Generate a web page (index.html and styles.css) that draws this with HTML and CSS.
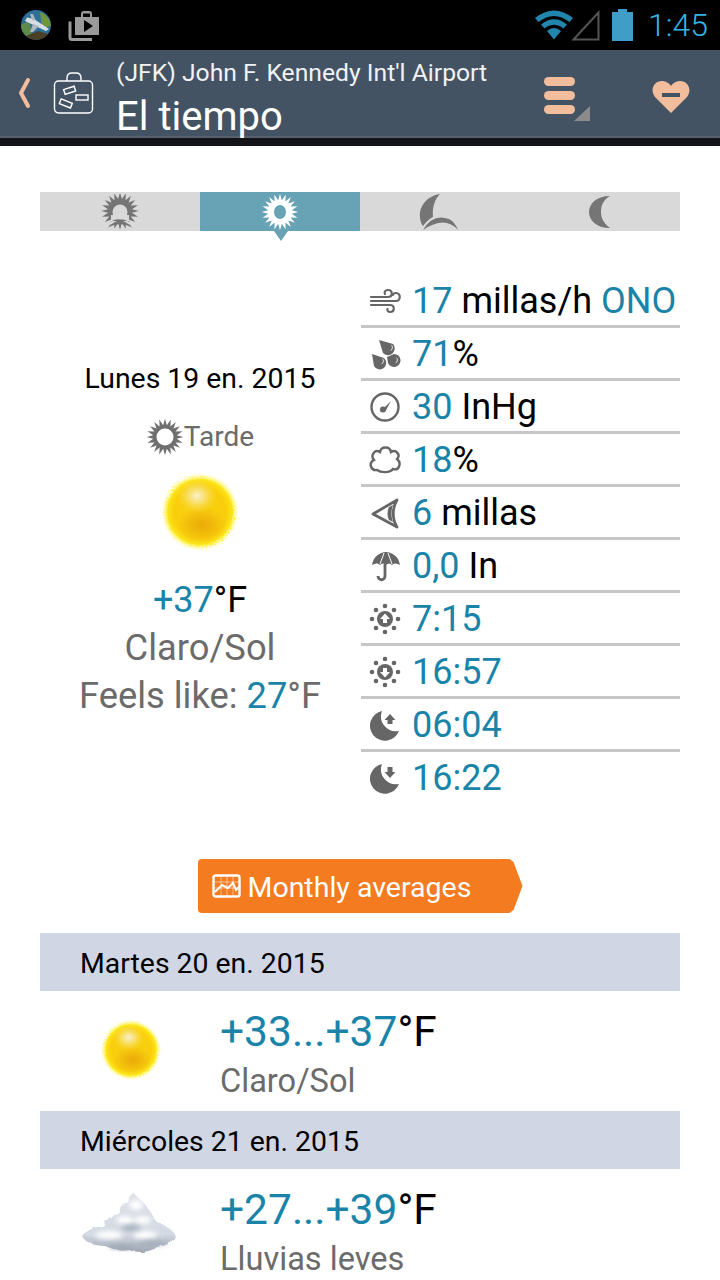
FILE: index.html
```html
<!DOCTYPE html>
<html lang="es">
<head>
    <meta charset="UTF-8">
    <meta name="viewport" content="width=device-width, initial-scale=1.0">
    <title>El tiempo</title>
    <link rel="stylesheet" href="styles.css">
</head>
<body>

    <svg class="defs" width="0" height="0">
        <defs>
            <polygon id="rays" points="17,0 10.9,1.7 16.2,5.3 9.8,5 13.8,10 7.8,7.8 10,13.8 5,9.8 5.3,16.2 1.7,10.9 0,17 -1.7,10.9 -5.3,16.2 -5,9.8 -10,13.8 -7.8,7.8 -13.8,10 -9.8,5 -16.2,5.3 -10.9,1.7 -17,0 -10.9,-1.7 -16.2,-5.3 -9.8,-5 -13.8,-10 -7.8,-7.8 -10,-13.8 -5,-9.8 -5.3,-16.2 -1.7,-10.9 0,-17 1.7,-10.9 5.3,-16.2 5,-9.8 10,-13.8 7.8,-7.8 13.8,-10 9.8,-5 16.2,-5.3 10.9,-1.7"/>
            <radialGradient id="sunGlow">
                <stop offset="0.78" stop-color="#fde61a"/>
                <stop offset="0.87" stop-color="#fdf040" stop-opacity="0.85"/>
                <stop offset="1" stop-color="#fffbb0" stop-opacity="0"/>
            </radialGradient>
            <radialGradient id="sunBody">
                <stop offset="0" stop-color="#f8cf12"/>
                <stop offset="0.8" stop-color="#f9cf0c"/>
                <stop offset="1" stop-color="#fde61a"/>
            </radialGradient>
            <radialGradient id="sunLow">
                <stop offset="0" stop-color="#e9a508" stop-opacity="0.9"/>
                <stop offset="1" stop-color="#e9a508" stop-opacity="0"/>
            </radialGradient>
            <radialGradient id="sunHigh">
                <stop offset="0" stop-color="#f8f0d2"/>
                <stop offset="0.4" stop-color="#f8e58a" stop-opacity="0.8"/>
                <stop offset="1" stop-color="#f8dc40" stop-opacity="0"/>
            </radialGradient>
            <symbol id="sunball" viewBox="0 0 80 80">
                <circle cx="40" cy="40" r="39" fill="url(#sunGlow)" filter="url(#fuzz)"/>
                <circle cx="40" cy="40" r="33" fill="url(#sunBody)"/>
                <ellipse cx="42" cy="53" rx="25" ry="18" fill="url(#sunLow)"/>
                <ellipse cx="37" cy="24" rx="20" ry="17" fill="url(#sunHigh)"/>
            </symbol>
            <g id="sunDots" fill="#666">
                <circle cx="16" cy="3" r="2.3"/><circle cx="16" cy="29" r="2.3"/>
                <circle cx="3" cy="16" r="2.3"/><circle cx="29" cy="16" r="2.3"/>
                <circle cx="7" cy="7" r="2.3"/><circle cx="25" cy="7" r="2.3"/>
                <circle cx="7" cy="25" r="2.3"/><circle cx="25" cy="25" r="2.3"/>
                <circle cx="16" cy="16" r="8"/>
            </g>
            <path id="moonShape" fill="#666" d="M13 2 A15 15 0 1 0 30 22 A15 15 0 0 1 13 2 Z"/>
            <filter id="fuzz" x="-10%" y="-10%" width="120%" height="120%">
                <feTurbulence type="fractalNoise" baseFrequency="0.5" numOctaves="1" seed="7"/>
                <feDisplacementMap in="SourceGraphic" scale="5"/>
            </filter>
            <filter id="fluff" x="-5%" y="-5%" width="110%" height="110%">
                <feTurbulence type="fractalNoise" baseFrequency="0.18" numOctaves="2" seed="4"/>
                <feDisplacementMap in="SourceGraphic" scale="4"/>
            </filter>
            <filter id="soft"><feGaussianBlur stdDeviation="2.500"/></filter>
            <linearGradient id="cloudFill" x1="0" y1="0" x2="0" y2="1">
                <stop offset="0" stop-color="#dde1e8"/>
                <stop offset="0.7" stop-color="#d4dae3"/>
                <stop offset="1" stop-color="#9fa8b5"/>
            </linearGradient>
        </defs>
    </svg>

    <!-- status bar -->
    <div class="status">
        <div class="status-left">
            <svg class="app-icon" width="32" height="32" viewBox="0 0 32 32">
                <circle cx="16" cy="16" r="15" fill="#2c6f97"/>
                <path d="M20 3 A15 15 0 0 1 31 17 L22 20 Z" fill="#6f9440"/>
                <path d="M1 16 L9 12 L12 26 L6 27 Q1 22 1 16 Z" fill="#5f8a4a"/>
                <path d="M6 27 A15 15 0 0 0 28 25 L18 22 Z" fill="#4a3f24"/>
                <path d="M5 12 L26 22 L29 20 L14 10 L7 8.500 Z" fill="#d8dde2"/>
                <path d="M13 15 L10 23 L13 23 L19 17 Z M16 12 L13 5 L10 5 L12 11 Z" fill="#aeb6c0"/>
            </svg>
            <svg width="32" height="32" viewBox="0 0 32 32">
                <path d="M7 8 H13 V5 Q13 2 16 2 H21 Q24 2 24 5 V8 H31 V26 H7 Z M15 8 H22 V4.5 H15 Z" fill="#9a9a9a" fill-rule="evenodd"/>
                <path d="M16 11 L25 17 L16 23 Z" fill="#000"/>
                <path d="M2 14 V30 Q2 32 4 32 H24" transform="translate(0,-1.5)" fill="none" stroke="#9a9a9a" stroke-width="3"/>
            </svg>
        </div>
        <div class="status-right">
            <svg class="wifi" width="40" height="32" viewBox="0 0 40 32">
                <path d="M1 9 Q20 -6 39 9 L35.5 13 Q20 1 4.5 13 Z" fill="#2285ad"/>
                <path d="M7 15.5 Q20 5 33 15.5 L29.5 19.5 Q20 12 10.5 19.5 Z" fill="#2285ad"/>
                <path d="M13 22 Q20 16 27 22 L20 30.5 Z" fill="#2285ad"/>
            </svg>
            <svg class="signal" width="29" height="31" viewBox="0 0 29 31">
                <path d="M27.5 2.5 V29.5 H2.5 Z" fill="none" stroke="#555" stroke-width="2"/>
            </svg>
            <svg class="battery" width="21" height="32" viewBox="0 0 21 32">
                <path d="M6 0 H15 V3 H21 V32 H0 V3 H6 Z" fill="#3f9dc8"/>
            </svg>
            <span class="clock">1:45</span>
        </div>
    </div>

    <!-- header -->
    <div class="topbar">
        <svg class="back" width="14" height="32" viewBox="0 0 14 32">
            <path d="M11 3 L4 16 L11 29" fill="none" stroke="#f2bd9c" stroke-width="4" stroke-linecap="round" stroke-linejoin="round"/>
        </svg>
        <svg class="case" width="42" height="42" viewBox="0 0 42 42" fill="none" stroke="#fff" stroke-width="1.4">
            <rect x="1.5" y="9" width="38" height="32" rx="4"/>
            <path d="M14 9 V6 Q14 1 19 1 H23 Q28 1 28 6 V9"/>
            <rect x="11" y="16" width="11" height="5" transform="rotate(-18 16 18)"/>
            <rect x="23" y="23" width="12" height="5"/>
            <rect x="7" y="29" width="12" height="5" transform="rotate(22 13 31)"/>
        </svg>
        <div class="titles">
            <div class="subtitle">(JFK) John F. Kennedy Int'l Airport</div>
            <div class="title">El tiempo</div>
        </div>
        <div class="menu">
            <svg width="48" height="46" viewBox="0 0 48 46">
                <rect x="0" y="0" width="31" height="9" rx="4.5" fill="#f2bd9c"/>
                <rect x="0" y="14" width="31" height="9" rx="4.5" fill="#f2bd9c"/>
                <rect x="0" y="28" width="31" height="9" rx="4.5" fill="#f2bd9c"/>
                <path d="M30 44 L46 29 V44 Z" fill="#8b8b8b"/>
            </svg>
        </div>
        <svg class="heart" width="38" height="34" viewBox="0 0 38 34">
            <path d="M19 33 L3 17 C-3 9 3 0 11 1 C15 1.5 18 4 19 6 C20 4 23 1.5 27 1 C35 0 41 9 35 17 Z" fill="#f2bd9c"/>
            <rect x="10" y="13" width="18" height="4" fill="#445364"/>
        </svg>
    </div>
    <div class="strip"></div>

    <div class="content">

        <!-- part of day tabs -->
        <div class="tabs">
            <div class="tab">
                <svg width="40" height="36" viewBox="-20 -17 40 36">
                    <use href="#rays" fill="#757575" transform="scale(1.1)"/>
                    <circle r="7.500" cy="1" fill="#d9d9d9"/>
                    <path d="M-19 19 Q-1 -3 19 19 Q0 4 -19 19 Z M-9 10 H9 V4 H-9 Z" fill="#d9d9d9"/>
                    <path d="M-12 17 Q0 2 12 17 Q0 9 -12 17 Z" fill="#757575"/>
                </svg>
            </div>
            <div class="tab tab-active">
                <svg width="40" height="38" viewBox="-20 -19 40 38">
                    <use href="#rays" fill="#fff" transform="scale(1.08)"/>
                    <ellipse rx="6" ry="7" fill="#67a2b5"/>
                </svg>
            </div>
            <div class="tab">
                <svg width="42" height="38" viewBox="0 0 42 38">
                    <path d="M21 1 C8 3 0 13 1 24 C1 28 3 32 4 33 C8 28 10 26 14 24 C13 14 16 6 21 1 Z" fill="#757575"/>
                    <path d="M4 37 Q14 20 30 26 Q36 29 39 37 Q26 22 4 37 Z" fill="#757575"/>
                </svg>
            </div>
            <div class="tab">
                <svg width="24" height="34" viewBox="0 0 24 34">
                    <path d="M22 1 C8 1 1 9 1 17 C1 25 8 33 22 33 C15 28 13 22 13 17 C13 11 15 5 22 1 Z" fill="#757575"/>
                </svg>
            </div>
        </div>

        <div class="now">
            <div class="now-left">
                <div class="now-date">Lunes 19 en. 2015</div>
                <div class="now-part">
                    <svg width="38" height="38" viewBox="-19 -19 38 38">
                        <use href="#rays" fill="#6f6f6f" transform="scale(1.08)"/>
                        <circle r="8.5" fill="#fff"/>
                    </svg>
                    <span>Tarde</span>
                </div>
                <svg class="now-sun" width="80" height="80"><use href="#sunball"/></svg>
                <div class="now-temp"><span class="val">+37</span>°F</div>
                <div class="now-desc">Claro/Sol</div>
                <div class="now-desc">Feels like: <span class="val">27</span><span>°F</span></div>
            </div>

            <div class="now-right">
                <div class="row">
                    <svg class="row-icon" width="32" height="32" viewBox="0 0 32 32" fill="none" stroke="#666" stroke-width="2.2" stroke-linecap="round">
                        <path d="M2 12 H19 C24 12 24 5 19 5 C16 5 15 7 16 9"/>
                        <path d="M2 16 H27 C32 16 32 8 27 8 C25 8 24 9 24 10"/>
                        <path d="M2 20 H21 C26 20 26 27 21 27 C19 27 18 25 18.500 24"/>
                    </svg>
                    <span class="val">17</span>&nbsp;millas/h&nbsp;<span class="val">ONO</span>
                </div>
                <div class="row">
                    <svg class="row-icon" width="32" height="32" viewBox="0 0 32 32">
                        <path d="M10 2 L24 6 A6.500 6.500 0 1 1 14 15 Z M3 16 L15 20 A6.500 6.500 0 1 1 5 28 Z M18 19 L25 16 A6.500 6.500 0 1 1 19 25 Z" fill="#666"/>
                        <path d="M22 6.500 A3.500 3.500 0 0 1 21 13 A5 5 0 0 0 22 6.500 Z M13 20 A3.500 3.500 0 0 1 12 26.500 A5 5 0 0 0 13 20 Z M27 19 A3.500 3.500 0 0 1 26 25.500 A5 5 0 0 0 27 19 Z" fill="#fff"/>
                    </svg>
                    <span class="val">71</span>%
                </div>
                <div class="row">
                    <svg class="row-icon" width="32" height="32" viewBox="0 0 32 32">
                        <circle cx="16" cy="16" r="13.500" fill="none" stroke="#666" stroke-width="2.400"/>
                        <path d="M11 21 L22 10 L16.500 20 Z" fill="#666"/>
                        <circle cx="14" cy="18.500" r="3" fill="#666"/>
                    </svg>
                    <span class="val">30</span>&nbsp;InHg
                </div>
                <div class="row">
                    <svg class="row-icon" width="32" height="32" viewBox="0 0 32 32">
                        <path d="M8 26 C2 27 -1 19 5 16 C1 11 6 5 11 8 C12 2 21 2 22 8 C27 5 32 11 28 15 C33 19 30 27 24 25 C21 29 12 29 8 26 Z" fill="none" stroke="#666" stroke-width="2.400"/>
                    </svg>
                    <span class="val">18</span>%
                </div>
                <div class="row">
                    <svg class="row-icon" width="32" height="32" viewBox="0 0 32 32">
                        <path d="M28 3 L4 17 L28 30 C23 22 23 11 28 3 Z" fill="none" stroke="#666" stroke-width="2.800" stroke-linejoin="round"/>
                        <path d="M20 10 L24 8 C22 13 22 20 24 25 L20 23 C18 19 18 14 20 10 Z" fill="#666"/>
                    </svg>
                    <span class="val">6</span>&nbsp;millas
                </div>
                <div class="row">
                    <svg class="row-icon" width="32" height="32" viewBox="0 0 32 32">
                        <path d="M3 15 C4 7 11 2 17 2 C23 2 30 7 31 15 C28 13 25 13 23 15 C21 13 19 13 17 15 C15 13 13 13 11 15 C9 13 6 13 3 15 Z" fill="#666"/>
                        <path d="M11 14 L15 3 M23 14 L19 3" stroke="#fff" stroke-width="1" fill="none"/>
                        <path d="M16 14 V26 C16 31 9 31 9 26" fill="none" stroke="#666" stroke-width="2.800"/>
                    </svg>
                    <span class="val">0,0</span>&nbsp;In
                </div>
                <div class="row">
                    <svg class="row-icon" width="32" height="32" viewBox="0 0 32 32">
                        <use href="#sunDots"/>
                        <path d="M16 10.500 L21 16 H18 V20 H14 V16 H11 Z" fill="#fff"/>
                    </svg>
                    <span class="val">7:15</span>
                </div>
                <div class="row">
                    <svg class="row-icon" width="32" height="32" viewBox="0 0 32 32">
                        <use href="#sunDots"/>
                        <path d="M16 21.500 L21 16 H18 V12 H14 V16 H11 Z" fill="#fff"/>
                    </svg>
                    <span class="val">16:57</span>
                </div>
                <div class="row">
                    <svg class="row-icon" width="32" height="32" viewBox="0 0 32 32">
                        <use href="#moonShape"/>
                        <path d="M21 5 L26.500 11 H23.500 V15 H18.500 V11 H15.500 Z" fill="#666"/>
                    </svg>
                    <span class="val">06:04</span>
                </div>
                <div class="row row-last">
                    <svg class="row-icon" width="32" height="32" viewBox="0 0 32 32">
                        <use href="#moonShape"/>
                        <path d="M21 16 L26.500 10 H23.500 V5 H18.500 V10 H15.500 Z" fill="#666"/>
                    </svg>
                    <span class="val">16:22</span>
                </div>
            </div>
        </div>

        <div class="btn-wrap">
            <div class="btn-monthly">
                <svg width="30" height="24" viewBox="0 0 30 24" fill="none" stroke="#fff">
                    <rect x="1.500" y="1.500" width="26" height="21" rx="2" stroke-width="2.400"/>
                    <path d="M2 8 H28 M2 14 H28 M9 2 V22 M15 2 V22 M21 2 V22" stroke-width="0.700" opacity="0.700"/>
                    <path d="M3 18 L10 11 L16 14 L21 9 L24 16 L28 12" stroke-width="2"/>
                </svg>
                <span class="btn-label">Monthly averages</span>
            </div>
        </div>

        <!-- next days -->
        <div class="day-bar">Martes 20 en. 2015</div>
        <div class="day">
            <div class="day-pic">
                <svg class="pic-sun" width="62" height="62"><use href="#sunball"/></svg>
            </div>
            <div class="day-info">
                <div class="day-temp"><span class="val">+33...+37</span>°F</div>
                <div class="day-desc">Claro/Sol</div>
            </div>
        </div>

        <div class="day-bar">Miércoles 21 en. 2015</div>
        <div class="day">
            <div class="day-pic">
                <svg class="pic-cloud" width="98" height="66" viewBox="0 0 98 66">
                    <g filter="url(#fluff)">
                        <path d="M1 46 C4 41 14 37 22 36 C24 30 32 24 38 24 C41 16 46 12 52 2 C56 8 64 12 68 20 C72 24 72 28 76 32 C84 35 93 40 95 47 C92 54 82 56 76 57 C68 63 56 63 48 60 C38 62 30 58 24 56 C14 56 3 52 1 46 Z" fill="url(#cloudFill)"/>
                    </g>
                    <g filter="url(#soft)" fill="#fff">
                        <ellipse cx="55" cy="15" rx="7" ry="5"/>
                        <ellipse cx="44" cy="30" rx="9" ry="4"/>
                        <ellipse cx="62" cy="30" rx="8" ry="4"/>
                        <ellipse cx="28" cy="45" rx="14" ry="4"/>
                        <ellipse cx="64" cy="45" rx="12" ry="4"/>
                    </g>
                    <g filter="url(#soft)" fill="#9aa4b2" opacity="0.800">
                        <ellipse cx="50" cy="38" rx="10" ry="3"/>
                        <ellipse cx="42" cy="57" rx="14" ry="2.500"/>
                        <ellipse cx="72" cy="53" rx="14" ry="2.500"/>
                    </g>
                </svg>
            </div>
            <div class="day-info">
                <div class="day-temp"><span class="val">+27...+39</span>°F</div>
                <div class="day-desc">Lluvias leves</div>
            </div>
        </div>

    </div>

</body>
</html>
```

FILE: styles.css
```css
html, body {
    margin: 0;
    padding: 0;
    height: 1280px;
    overflow: hidden;
    background-color: #fff;
    font-family: Roboto, 'Liberation Sans', sans-serif;
    color: #000;
}

svg {
    display: block;
    flex: none;
}

.defs {
    position: absolute;
}

.val {
    color: #1a84a8;
}

/* status bar */
.status {
    height: 50px;
    background-color: #000;
    display: flex;
    justify-content: space-between;
    align-items: center;
}

.status-left {
    display: flex;
    align-items: center;
    gap: 16px;
    padding-left: 20px;
}

.status-right {
    display: flex;
    align-items: center;
    padding-right: 12px;
}

.signal {
    margin-left: -3px;
}

.battery {
    margin-left: 12px;
}

.clock {
    margin-left: 15px;
    font-size: 32px;
    font-weight: 300;
    color: #33b5e5;
}

/* header */
.topbar {
    height: 88px;
    background-color: #445364;
    display: flex;
    align-items: center;
    box-sizing: border-box;
    border-bottom: 2px solid #56616e;
}

.back {
    margin-left: 17px;
}

.case {
    margin-left: 22px;
}

.titles {
    align-self: flex-start;
    margin-left: 21px;
    padding-top: 8px;
    width: 428px;
    color: #fff;
}

.subtitle {
    font-size: 24.7px;
    line-height: 30px;
    white-space: nowrap;
    color: #f0f2f4;
}

.title {
    margin-top: 6px;
    font-size: 40px;
    line-height: 46px;
}

.menu {
    margin-top: 14px;
}

.heart {
    margin-left: 60px;
    margin-top: 8px;
}

.strip {
    height: 8px;
    background-color: #141418;
}

/* main */
.content {
    padding: 46px 40px 0;
}

.tabs {
    display: grid;
    grid-template-columns: repeat(4, 1fr);
    height: 39px;
    background-color: #d9d9d9;
}

.tab {
    position: relative;
    display: flex;
    justify-content: center;
    align-items: center;
    overflow: visible;
}

.tab-active {
    background-color: #67a2b5;
}

.tab-active::after {
    content: "";
    position: absolute;
    left: 74px;
    top: 39px;
    border-left: 7px solid transparent;
    border-right: 7px solid transparent;
    border-top: 10px solid #67a2b5;
}

.now {
    display: grid;
    grid-template-columns: 320px 1fr;
    margin-top: 44px;
}

.now-left {
    display: flex;
    flex-direction: column;
    align-items: center;
    padding-top: 88px;
}

.now-date {
    font-size: 28.4px;
    line-height: 32px;
    white-space: nowrap;
}

.now-part {
    display: flex;
    align-items: center;
    margin-top: 23px;
    font-size: 28px;
    line-height: 38px;
    color: #6b6b6b;
}

.now-sun {
    margin-top: 16px;
}

.now-temp {
    margin-top: 24px;
    font-size: 36px;
    line-height: 48px;
}

.now-desc {
    font-size: 36.3px;
    line-height: 48px;
    color: #6b6b6b;
    white-space: nowrap;
}

.now-right {
    margin-left: 1px;
}

.row {
    display: flex;
    align-items: center;
    height: 53px;
    box-sizing: border-box;
    border-bottom: 3px solid #c6c6c6;
    padding-left: 8px;
    padding-top: 2px;
    font-size: 36px;
    white-space: nowrap;
}

.row-last {
    border-bottom: none;
    padding-bottom: 3px;
}

.row-icon {
    margin-right: 11px;
}

/* button */
.btn-wrap {
    display: flex;
    justify-content: center;
    margin-top: 54px;
}

.btn-monthly {
    display: flex;
    align-items: center;
    gap: 6px;
    width: 325px;
    height: 54px;
    box-sizing: border-box;
    padding-left: 14px;
    background-color: #f47b20;
    color: #fff;
    font-size: 28.5px;
    border-radius: 4px;
    clip-path: polygon(0 0, 312px 0, 316px 3px, 325px 27px, 316px 51px, 312px 54px, 0 54px);
}

.btn-label {
    padding-top: 2px;
}

/* next days */
.day-bar {
    height: 58px;
    margin-top: 20px;
    background-color: #d0d6e3;
    padding-left: 40px;
    font-size: 28.4px;
    line-height: 62px;
}

.day + .day-bar {
    margin-top: 0;
}

.day {
    display: flex;
    align-items: center;
    height: 120px;
}

.day-pic {
    width: 180px;
    display: flex;
    justify-content: center;
}

.pic-sun {
    margin-left: 2px;
    margin-bottom: 2px;
}

.pic-cloud {
    margin-bottom: 12px;
}

.day-info {
    align-self: flex-start;
    padding-top: 16px;
}

.day-temp {
    font-size: 42.5px;
    line-height: 50px;
}

.day-desc {
    font-size: 32.6px;
    line-height: 48px;
    color: #6b6b6b;
}
```
